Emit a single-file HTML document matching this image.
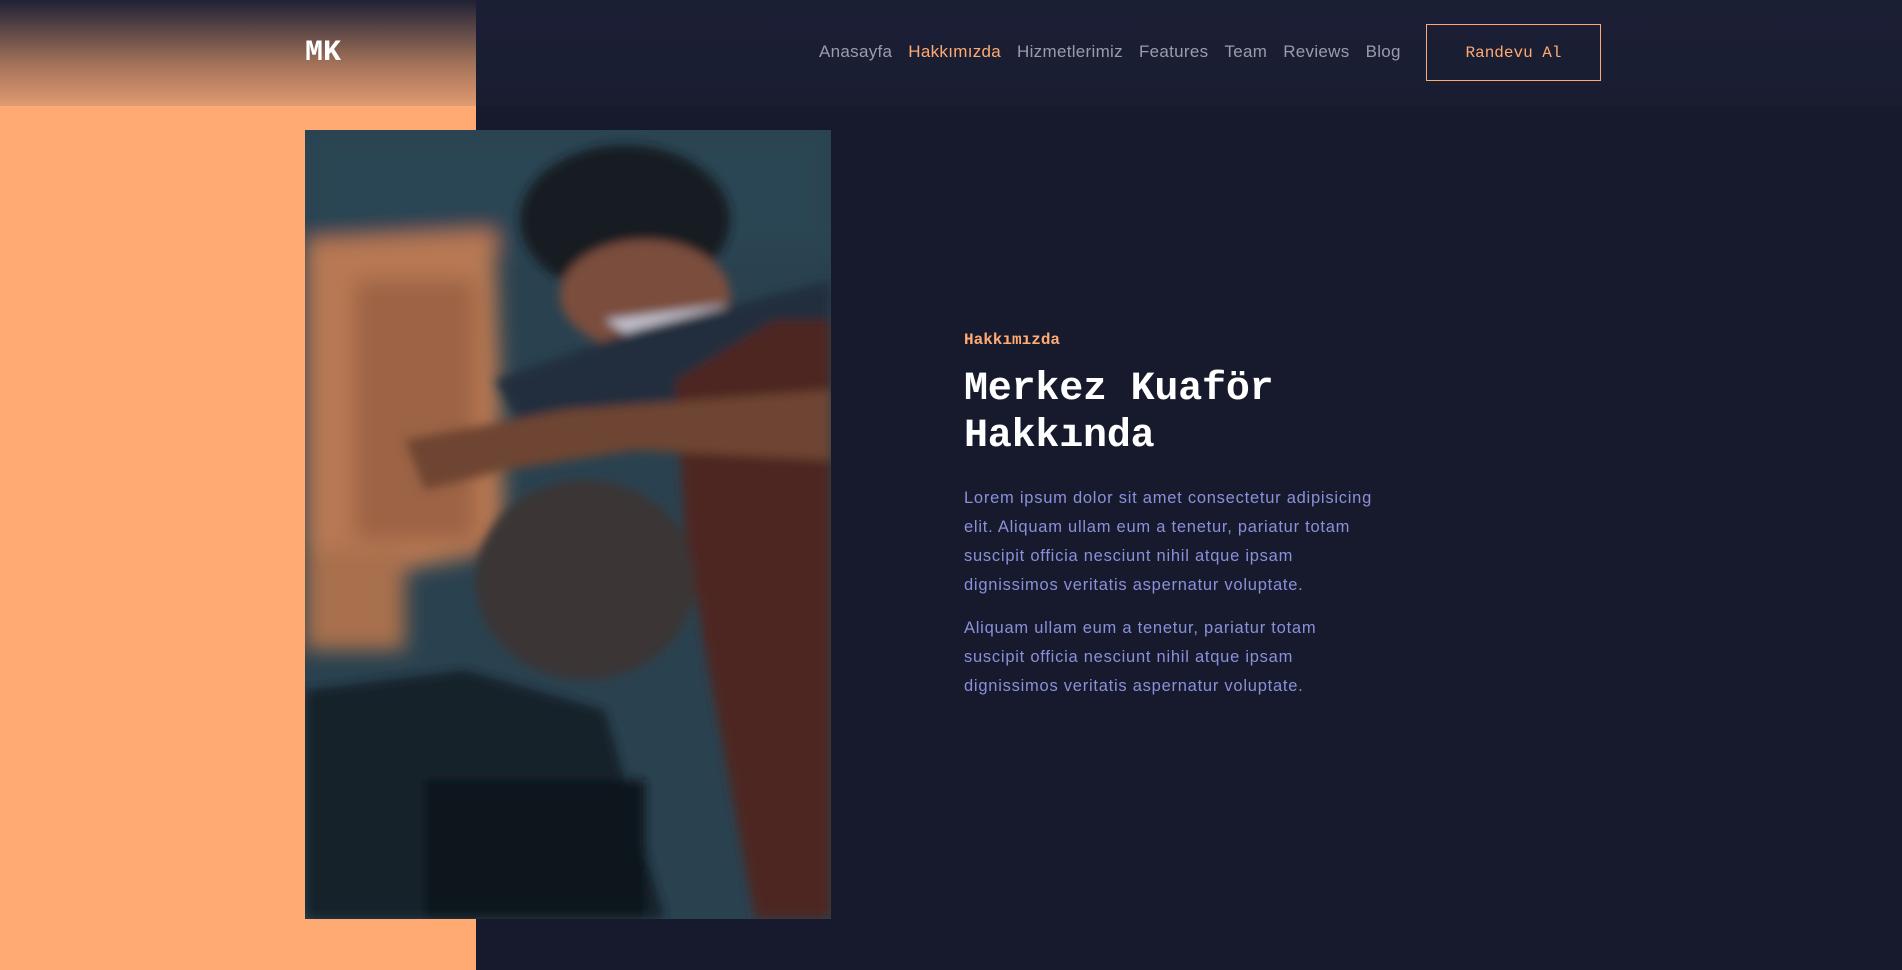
<!DOCTYPE html>
<html><head><meta charset="utf-8"><style>
*{margin:0;padding:0;box-sizing:border-box}
body{width:1902px;height:970px;overflow:hidden;background:#161a2c;font-family:"Liberation Sans",sans-serif;position:relative}
.orange{position:absolute;left:0;top:0;width:476px;height:970px;background:#ffaa73}
.hdr{position:absolute;left:0;top:0;width:1902px;height:106px;background:linear-gradient(#1b1f35,#1a1d31)}
.hdrL{position:absolute;left:0;top:0;width:476px;height:106px;background:linear-gradient(#1f2235,#a27159 60%,#e09a70)}
.logo{position:absolute;left:305px;top:36px;color:#fff;font:bold 30px "Liberation Mono",monospace}
.nav{position:absolute;top:42px;left:819px;font-size:17px;color:#9a9cad;display:flex;gap:16px;letter-spacing:0.3px}
.nav .a{color:#ffaa73}
.btn{position:absolute;left:1426px;top:24px;width:175px;height:57px;border:1px solid #ffaa73;color:#ffaa73;font:16px "Liberation Mono",monospace;display:flex;align-items:center;justify-content:center}
.img{position:absolute;left:305px;top:130px;width:526px;height:789px;overflow:hidden}
.tag{position:absolute;left:964px;top:331px;color:#ffaa73;font:bold 16px "Liberation Mono",monospace}
h1{position:absolute;left:964px;top:366px;color:#fff;font:bold 40px/47px "Liberation Mono",monospace;letter-spacing:-0.2px}
.p{position:absolute;left:964px;white-space:nowrap;color:#8a90da;font-size:16.5px;line-height:29px;letter-spacing:0.75px}
</style></head><body>
<div class="orange"></div>
<div class="hdr"></div><div class="hdrL"></div>
<div class="logo">MK</div>
<div class="nav"><span>Anasayfa</span><span class="a">Hakkımızda</span><span>Hizmetlerimiz</span><span>Features</span><span>Team</span><span>Reviews</span><span>Blog</span></div>
<div class="btn">Randevu Al</div>
<div class="img"><svg width="526" height="789" viewBox="0 0 526 789">
<defs><filter id="b"><feGaussianBlur stdDeviation="10"/></filter><filter id="s"><feGaussianBlur stdDeviation="5"/></filter></defs>
<rect width="526" height="789" fill="#2a4250"/>
<g filter="url(#b)">
<rect x="0" y="0" width="526" height="120" fill="#2a4453"/>
<path d="M0 110 L190 100 L200 420 L100 440 L0 420Z" fill="#b77852"/>
<rect x="50" y="150" width="120" height="260" fill="#9c6444"/>
<rect x="0" y="420" width="100" height="100" fill="#a8704d"/>
</g>
<g filter="url(#s)">
<ellipse cx="320" cy="90" rx="105" ry="75" fill="#151a22"/>
<ellipse cx="340" cy="165" rx="85" ry="55" fill="#7a4e3c"/>
<path d="M300 190 L420 175 L430 205 L340 215Z" fill="#c2c0cc"/>
<path d="M190 250 L330 200 L526 150 L526 300 L350 290 L220 300Z" fill="#222f3c"/>
<path d="M370 250 L470 190 L526 190 L526 789 L450 789 L400 520 L380 400Z" fill="#4e2622"/>
<path d="M100 310 L260 280 L526 260 L526 330 L330 320 L200 340 L120 360Z" fill="#6e4533"/>
<ellipse cx="280" cy="450" rx="110" ry="100" fill="#3a3636"/>
<path d="M0 560 L160 540 L300 580 L360 789 L0 789Z" fill="#16202b"/>
<rect x="120" y="650" width="220" height="139" fill="#10151d"/>
</g>
</svg></div>
<div class="tag">Hakkımızda</div>
<h1>Merkez Kuaför<br>Hakkında</h1>
<div class="p" style="top:484px">Lorem ipsum dolor sit amet consectetur adipisicing<br>elit. Aliquam ullam eum a tenetur, pariatur totam<br>suscipit officia nesciunt nihil atque ipsam<br>dignissimos veritatis aspernatur voluptate.</div>
<div class="p" style="top:614px">Aliquam ullam eum a tenetur, pariatur totam<br>suscipit officia nesciunt nihil atque ipsam<br>dignissimos veritatis aspernatur voluptate.</div>
</body></html>
